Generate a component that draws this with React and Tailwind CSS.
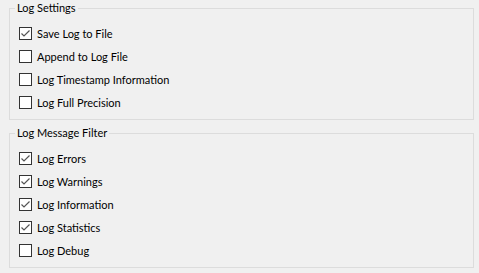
import React from 'react';

const Check = ({ checked }) => (
  <span className="w-[13px] h-[13px] border border-[#333333] bg-white shrink-0 relative">
    {checked && (
      <svg className="absolute left-[-1px] top-[-1px]" width="13" height="13" viewBox="0 0 13 13">
        <path d="M2.5 6.5 L5 9 L10.5 3.5" fill="none" stroke="#555555" strokeWidth="1.2" />
      </svg>
    )}
  </span>
);

const Row = ({ label, checked }) => (
  <div className="flex items-center h-[23px] ml-[4px] gap-[5px]">
    <Check checked={checked} />
    <span className="text-[11px] leading-[16px] text-black">{label}</span>
  </div>
);

const Group = ({ title, items, height, className = '' }) => (
  <fieldset className={`border border-[#dcdcdc] pl-[5px] w-[465px] ${height} ${className}`}>
    <legend className="px-[2px] text-[11px] leading-[16px] text-black">{title}</legend>
    <div className="mt-[6px]">
      {items.map((it) => (
        <Row key={it.label} label={it.label} checked={it.checked} />
      ))}
    </div>
  </fieldset>
);

const settings = [
  { label: 'Save Log to File', checked: true },
  { label: 'Append to Log File', checked: false },
  { label: 'Log Timestamp Information', checked: false },
  { label: 'Log Full Precision', checked: false },
];

const filters = [
  { label: 'Log Errors', checked: true },
  { label: 'Log Warnings', checked: true },
  { label: 'Log Information', checked: true },
  { label: 'Log Statistics', checked: true },
  { label: 'Log Debug', checked: false },
];

export default function App() {
  return (
    <div className="w-[479px] h-[273px] bg-[#f0f0f0] pl-[9px]" style={{ fontFamily: 'Lato, sans-serif' }}>
      <Group title="Log Settings" items={settings} height="h-[120px]" />
      <Group title="Log Message Filter" items={filters} height="h-[143px]" className="mt-[5px]" />
    </div>
  );
}
